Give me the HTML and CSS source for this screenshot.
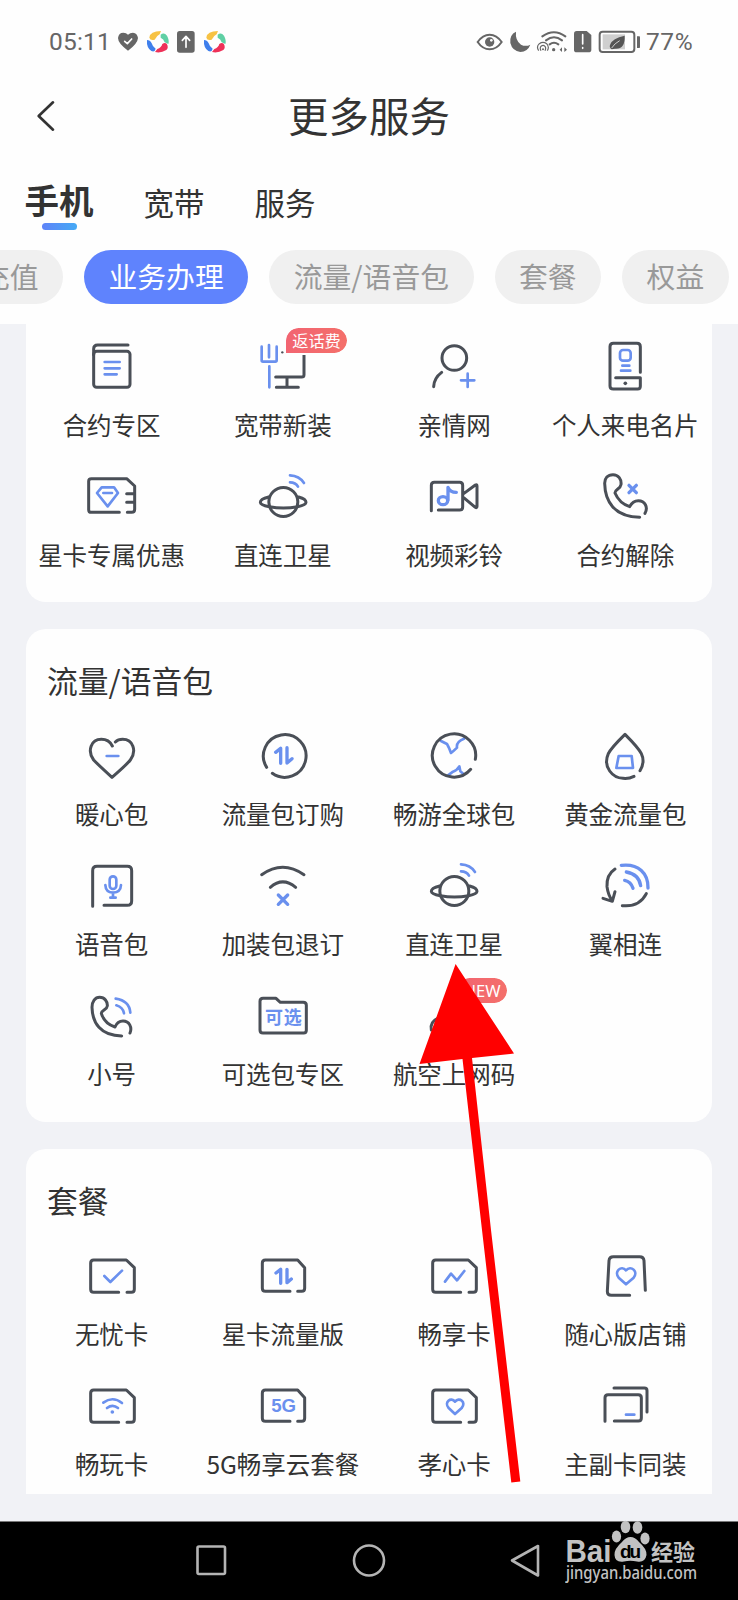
FILE: index.html
```html
<!DOCTYPE html>
<html lang="zh-CN">
<head>
<meta charset="utf-8">
<title>更多服务</title>
<link rel="stylesheet" href="styles.css">
</head>
<body>
<svg class="defs" width="0" height="0">
  <defs>
    <symbol id="sat" viewBox="753 42 192 192">
      <circle class="d" cx="850" cy="156" r="43.500"/>
      <path class="d" d="M806 141Q781 147 781 157Q781 166 808 170Q850 178 893 170Q918 166 918 157Q918 147 896 141"/>
      <path class="b" d="M870 76Q898 77 912 99M870 97Q887 97 894 110"/>
    </symbol>
    <symbol id="sim" viewBox="239 39 192 192">
      <path class="d" d="M355 187H280q-9 0-9-9V99q0-9 9-9H378L402 113V178q0 9-9 9H380"/>
    </symbol>
    <symbol id="pinwheel" viewBox="435 90 72 72">
      <path fill="#f7c244" d="M445 113Q447 93 480 93L476 103Q466 108 461 119Q448 123 445 113Z"/>
      <path fill="#5fd0a4" d="M479 104Q489 95 498 107Q506 122 502 132L491 127Q488 117 479 113Z"/>
      <path fill="#ee3158" d="M497 131Q504 142 496 150Q480 160 462 156L469 147Q481 143 484 132Q491 127 497 131Z"/>
      <path fill="#3f7fec" d="M438 120Q447 120 452 130Q455 141 464 146Q461 158 451 153Q436 143 438 120Z"/>
    </symbol>
  </defs>
</svg>

<div class="phone">
  <header class="head">
    <div class="status">
      <span class="time">05:11</span>
      <svg width="22" height="24" viewBox="352 90 66 72"><path class="g" d="M385 152Q355 130 355 114Q357 98 371 98Q380 98 385 104Q391 98 400 98Q413 99 415 114Q414 131 385 152Z"/><path class="w" d="M375 124L383 131L396 117"/></svg>
      <svg width="24" height="24"><use href="#pinwheel"/></svg>
      <svg width="20" height="24" viewBox="528 90 60 72"><rect class="g" x="531" y="93" width="53" height="65" rx="8"/><path class="w" d="M558 142V110M547 121L558 109L569 121"/></svg>
      <svg width="24" height="24"><use href="#pinwheel"/></svg>
      <div class="status-right">
        <svg width="28" height="24" viewBox="322 90 84 72"><path class="gs" d="M327 126Q342 104 363 104Q384 104 399 126Q384 148 363 148Q342 148 327 126Z"/><circle class="g" cx="363" cy="126" r="14"/><circle fill="#fff" cx="368" cy="121" r="4"/></svg>
        <svg width="22" height="24" viewBox="424 90 66 72"><path class="g" d="M445 95Q425 104 428 129Q434 153 458 156Q480 155 488 134Q474 141 460 134Q442 121 445 95Z"/></svg>
        <svg width="32" height="24" viewBox="504 90 96 72"><path class="gs" d="M523 109Q558 84 592 109M534 121Q558 103 582 121M545 133Q558 123 571 133"/><circle class="g" cx="557" cy="149" r="5"/><path class="thin" d="M512 152Q504 140 514 131Q525 123 536 131Q545 141 538 152M519 152Q514 143 520 138Q526 134 531 139Q535 144 531 152"/><circle class="g" cx="525" cy="148" r="3"/><path class="g" d="M582 142V156L575 149ZM589 142V156L597 149Z"/></svg>
        <svg width="20" height="24" viewBox="612 90 60 72"><path class="g" d="M623 93H653L667 105V149Q667 157 658 157H623Q615 157 615 149V101Q615 93 623 93Z"/><path class="w" d="M641 104V132M641 143V145"/></svg>
        <svg width="43" height="24" viewBox="690 90 129 72"><rect x="704" y="103" width="67" height="45" fill="#cfcfcf"/><rect class="gs" x="695" y="95" width="104" height="61" rx="9"/><path class="g" d="M807 109h7q2 0 2 3v29q0 3-2 3h-7Z"/><path fill="#555" d="M770 107Q772 148 741 146L731 148Q722 142 727 133Q733 115 770 107Z"/><path d="M731 144Q740 130 755 122" fill="none" stroke="#cfcfcf" stroke-width="3"/></svg>
        <span class="pct">77%</span>
      </div>
    </div>
    <div class="bar">
      <svg class="back" width="24" height="34" viewBox="102 296 72 102"><path d="M159 306L116 347L159 388"/></svg>
      <h1>更多服务</h1>
    </div>
    <nav class="tabs">
      <span class="tab on">手机</span><span class="tab">宽带</span><span class="tab">服务</span>
    </nav>
    <div class="chips">
      <span class="chip">充值</span><span class="chip on">业务办理</span><span class="chip">流量/语音包</span><span class="chip">套餐</span><span class="chip">权益</span>
    </div>
  </header>

  <main class="scroll">
    <section class="card first">
      <div class="grid">
        <div class="cell"><svg class="ico" viewBox="239 312 192 192"><rect class="d" x="280" y="364" width="109" height="108" rx="9"/><path class="d" d="M280 374V357q0-12 12-12H383"/><path class="b" d="M313 396H358M313 415H358M313 433H349"/></svg><span>合约专区</span></div>
        <div class="cell"><svg class="ico" viewBox="753 312 192 192"><path class="b" d="M785 350V391q0 4 4 4H826q4 0 4-4V350M807 345V382M808 409V472"/><path class="d" d="M827 441H905q7 0 7-7V350M829 472H895M861 445V468"/><circle cx="847" cy="367" r="3.500" fill="#4a4f57"/></svg><span>宽带新装</span><i class="badge">返话费</i></div>
        <div class="cell"><svg class="ico" viewBox="162 312 192 192"><circle class="d" cx="259" cy="384" r="37"/><path class="d" d="M221 427Q198 444 197 470"/><path class="b" d="M299 431V471M279 451H319"/></svg><span>亲情网</span></div>
        <div class="cell"><svg class="ico" viewBox="676 312 192 192"><path class="d" d="M818 427V350q0-10-10-10H737q-10 0-10 10V468q0 9 10 9H810q8 0 8-8V443H744"/><circle cx="773" cy="460" r="5.500" fill="#4a4f57"/><rect class="b" x="757" y="360" width="32" height="32" rx="9"/><path class="b" d="M764 407H785M760 422H788"/></svg><span>个人来电名片</span></div>
        <div class="cell"><svg class="ico" viewBox="239 42 192 192"><path class="d" d="M357 187H273q-8 0-8-8V94q0-8 8-8H379L403 108V178q0 9-9 9H381M379 131H400M379 157H400"/><path class="b" d="M304 112H341L353 129L322 169L290 129ZM309 129H335"/></svg><span>星卡专属优惠</span></div>
        <div class="cell"><svg class="ico"><use href="#sat"/></svg><span>直连卫星</span></div>
        <div class="cell"><svg class="ico" viewBox="162 42 192 192"><path class="d" d="M190 182V106q0-9 9-9H275q9 0 9 9V171q0 9-9 9H211M287 131L322 105q5-3 5 3V169q0 6-5 3L287 143"/><ellipse class="b fat" cx="225" cy="152" rx="14" ry="12"/><path class="b fat" d="M240 150V112Q246 127 265 127"/></svg><span>视频彩铃</span></div>
        <div class="cell"><svg class="ico" viewBox="676 42 192 192"><path class="d" d="M816 202C740 200 712 155 711 100C711 85 720 74 736 74C752 74 762 88 760 104C758 118 741 118 742 129C750 148 768 164 786 170C792 158 800 152 812 152C832 152 842 172 832 190"/><path class="b fat" d="M784 106L806 128M806 106L784 128"/></svg><span>合约解除</span></div>
      </div>
    </section>

    <section class="card">
      <h2>流量/语音包</h2>
      <div class="grid">
        <div class="cell"><svg class="ico" viewBox="239 39 192 192"><path class="d" d="M336 108Q326 88 303 88C272 88 260 123 280 150Q290 161 335 202Q380 163 390 150C410 123 398 88 367 88Q353 88 345 96"/><path class="b" d="M319 138H354"/></svg><span>暖心包</span></div>
        <div class="cell"><svg class="ico" viewBox="753 39 192 192"><path class="d" d="M800 172A64 64 0 1 1 817 190"/><path class="b fat" d="M827 127L842 115V160M861 113V159L876 146"/></svg><span>流量包订购</span></div>
        <div class="cell"><svg class="ico" viewBox="162 39 192 192"><path class="b" d="M219 93L237 102Q243 112 249 129Q257 123 267 113Q264 95 288 86M240 196L255 185Q267 181 274 169L277 184L284 190"/><path class="d" d="M308 178A65 65 0 1 1 322 148"/></svg><span>畅游全球包</span></div>
        <div class="cell"><svg class="ico" viewBox="676 39 192 192"><path class="d" d="M817 182Q833 156 821 131Q813 114 772 73Q730 114 722 131C704 172 736 204 766 205Q783 207 799 199"/><path class="b" d="M753 138H792L796 174H746Z"/></svg><span>黄金流量包</span></div>
        <div class="cell"><svg class="ico" viewBox="239 429 192 192"><path class="d" d="M277 589V482q0-13 13-13H381q13 0 13 13V573q0 13-13 13H311"/><rect class="b" x="328" y="499" width="20" height="38" rx="10"/><path class="b" d="M315 525Q316 547 338 548Q361 547 362 525M338 549V561M330 563H346"/></svg><span>语音包</span></div>
        <div class="cell"><svg class="ico" viewBox="753 429 192 192"><path class="d" d="M785 494Q848 449 912 494M811 532Q848 499 887 532"/><path class="b fat" d="M835 555L863 583M863 555L835 583"/></svg><span>加装包退订</span></div>
        <div class="cell"><svg class="ico"><use href="#sat"/></svg><span>直连卫星</span></div>
        <div class="cell"><svg class="ico" viewBox="676 429 192 192"><path class="d" d="M742 477Q716 494 718 530Q721 554 733 571M706 565L734 574L742 545M764 587Q815 592 836 551"/><path class="b fat" d="M761 466C813 460 842 490 841 534M776 486Q814 493 819 527M771 511Q790 515 796 535"/></svg><span>翼相连</span></div>
        <div class="cell"><svg class="ico" viewBox="239 69 192 192"><path class="d" d="M364 228C300 227 276 188 275 142C275 125 284 112 298 112C313 112 322 125 321 138C320 150 303 150 303 160C309 180 325 195 344 201C349 189 356 183 368 183C387 183 396 202 389 219"/><path class="b" d="M346 116Q387 122 390 158M348 136Q368 142 371 160"/></svg><span>小号</span></div>
        <div class="cell"><svg class="ico" viewBox="753 69 192 192"><path class="d" d="M780 210V124q0-9 9-9H828L841 127H910q9 0 9 9V211q0 8-8 8H789q-9 0-9-9Z"/><text class="cjk" x="850" y="193" textLength="110">可选</text></svg><span>可选包专区</span></div>
        <div class="cell"><svg class="ico" viewBox="162 69 192 192"><path class="d" d="M209 175Q185 186 190 210"/></svg><span>航空上网码</span><i class="badge new">NEW</i></div>
      </div>
    </section>

    <section class="card last">
      <h2>套餐</h2>
      <div class="grid">
        <div class="cell"><svg class="ico" viewBox="239 39 192 192"><use href="#sim" x="239" y="39" width="192" height="192"/><path class="b" d="M312 138L330 156L365 122"/></svg><span>无忧卡</span></div>
        <div class="cell"><svg class="ico" viewBox="753 39 192 192"><path class="d" d="M870 184H796q-9 0-9-9V99q0-9 9-9H893L914 113V175q0 9-9 9H893"/><path class="b fat" d="M828 129L842 118V160M861 118V158L874 147"/></svg><span>星卡流量版</span></div>
        <div class="cell"><svg class="ico" viewBox="162 39 192 192"><use href="#sim" x="162" y="39" width="192" height="192"/><path class="b" d="M231 155L249 131L267 151L289 123"/></svg><span>畅享卡</span></div>
        <div class="cell"><svg class="ico" viewBox="676 39 192 192"><path class="d" d="M833 181L829 92q-1-12-13-12H737q-12 0-13 12L719 184q0 12 12 12H786"/><path class="b" d="M775 163L753 143C738 125 761 104 775 121C790 104 813 125 798 143Z"/></svg><span>随心版店铺</span></div>
        <div class="cell"><svg class="ico" viewBox="239 39 192 192"><use href="#sim" x="239" y="39" width="192" height="192"/><path class="b" d="M309 128Q337 107 365 129M320 144Q337 131 353 144"/><circle cx="336" cy="156" r="5.500" fill="#6a90ee"/></svg><span>畅玩卡</span></div>
        <div class="cell"><svg class="ico" viewBox="753 39 192 192"><path class="d" d="M870 184H796q-9 0-9-9V99q0-9 9-9H893L914 113V175q0 9-9 9H893"/><text class="lat" x="851" y="156" textLength="74">5G</text></svg><span>5G畅享云套餐</span></div>
        <div class="cell"><svg class="ico" viewBox="162 39 192 192"><use href="#sim" x="162" y="39" width="192" height="192"/><path class="b" d="M261 162L242 144C227 127 249 109 261 125C274 109 296 127 281 144Z"/></svg><span>孝心卡</span></div>
        <div class="cell"><svg class="ico" viewBox="676 429 192 192"><path class="d" d="M712 574V503q0-9 9-9H812q9 0 9 9V564q0 9-9 9H740M739 474H830q8 0 8 8V546"/><path class="b" d="M775 554H800"/></svg><span>主副卡同装</span></div>
      </div>
    </section>
  </main>

  <footer class="nav">
    <svg width="36" height="36"><rect x="3.500" y="3.500" width="27.500" height="27.500" rx="1.500"/></svg>
    <svg width="36" height="36"><circle cx="18" cy="17.500" r="15"/></svg>
    <svg width="36" height="36"><path d="M4 17.500L30 3V32.500Z"/></svg>
  </footer>

  <svg class="mark" width="136" height="68" viewBox="0 0 136 68">
    <text class="m1" x="0.500" y="41.500" textLength="46" lengthAdjust="spacingAndGlyphs">Bai</text>
    <ellipse cx="51.500" cy="16.500" rx="4.600" ry="6"/><ellipse cx="60.500" cy="7" rx="4.800" ry="6.200"/><ellipse cx="72.500" cy="7.500" rx="4.800" ry="6.200"/><ellipse cx="80" cy="18.500" rx="4.600" ry="6"/>
    <path d="M65.500 17Q70 17 74 22Q82 29 81.500 35Q80 43 72 41.500Q65 40 59 41.500Q50 43 49.500 35Q49 29 57 22Q61 17 65.500 17Z"/>
    <text class="m2" x="55" y="38" textLength="21">du</text>
    <text class="m3" x="86" y="39.500" textLength="44">经验</text>
    <text class="m4" x="1" y="59" textLength="131" lengthAdjust="spacingAndGlyphs">jingyan.baidu.com</text>
  </svg>
  <svg class="arrow" width="102" height="520" viewBox="419 963 102 520"><path d="M455.600 964L514 1053.500L472 1058L491 1230L520.300 1481.500L511.300 1482.500L482 1230L462.500 1059L419.500 1064Z"/></svg>
</div>
</body>
</html>
```

FILE: styles.css
```css
* { box-sizing: border-box; }
body {
  margin: 0;
  font-family: "Noto Sans CJK SC", sans-serif;
  color: #333;
  background: #fff;
}
.defs { position: absolute; }
.phone {
  position: relative;
  width: 738px;
  height: 1600px;
  overflow: hidden;
  display: flex;
  flex-direction: column;
}

.head { height: 324px; flex: none; background: #fefefe; }
.status {
  height: 84px;
  padding: 0 45px 0 49px;
  display: flex;
  align-items: center;
  gap: 6.5px;
  color: #666;
  font: 24.5px/30px Roboto, sans-serif;
}
.time { width: 61.5px; white-space: nowrap; letter-spacing: 0.2px; }
.status-right { margin-left: auto; display: flex; align-items: center; gap: 5px; }
.g { fill: #666; }
.gs { fill: none; stroke: #666; stroke-width: 6; stroke-linecap: round; }
.thin { fill: none; stroke: #666; stroke-width: 3.5; }
.w { fill: none; stroke: #fff; stroke-width: 5; stroke-linecap: round; stroke-linejoin: round; }
.pct { width: 47px; letter-spacing: 0.6px; }

.bar {
  height: 64px;
  padding: 0 34px;
  display: grid;
  grid-template-columns: 24px 1fr 24px;
  align-items: center;
}
.back path { fill: none; stroke: #333; stroke-width: 8; stroke-linecap: round; stroke-linejoin: round; }
h1 { margin: 0; padding-bottom: 2px; font-size: 40.5px; line-height: 60px; font-weight: 400; text-align: center; }

.tabs {
  height: 102px;
  padding: 29px 24.5px 0;
  display: flex;
  align-items: flex-start;
  gap: 50px;
  font-size: 30.5px;
  line-height: 50px;
}
.tab.on {
  font-size: 34.5px;
  font-weight: 700;
  line-height: 45px;
  display: flex;
  flex-direction: column;
  align-items: center;
}
.tab.on::after {
  content: "";
  width: 35px;
  height: 7px;
  margin-top: 1px;
  border-radius: 4px;
  background: linear-gradient(90deg, #5f83f8, #45aaf5);
}

.chips { display: flex; gap: 21px; margin-left: -43.6px; }
.chip {
  flex: none;
  height: 53.5px;
  padding: 0 24.5px;
  border-radius: 27px;
  background: #f0f0f0;
  color: #999;
  font-size: 28.8px;
  line-height: 52px;
  white-space: nowrap;
}
.chip.on { background: #5f83fd; color: #fff; }

.scroll {
  height: 1197px;
  flex: none;
  padding: 0 26px 27px;
  background: #f1f2f6;
  display: flex;
  flex-direction: column;
  gap: 27px;
}
.card { flex: none; height: 493px; background: #fefefe; border-radius: 20px; }
.card.first { height: 278px; padding-top: 10px; border-radius: 0 0 20px 20px; }
.card.last { height: 345px; border-radius: 20px 20px 0 0; }
h2 {
  margin: 0;
  height: 94px;
  padding: 0 21px;
  font-size: 30.8px;
  line-height: 101px;
  font-weight: 400;
}
.grid { display: grid; grid-template-columns: repeat(4, 171.25px); }
.cell {
  position: relative;
  height: 130px;
  display: flex;
  flex-direction: column;
  align-items: center;
  gap: 9px;
  font-size: 24.5px;
  line-height: 36px;
  white-space: nowrap;
}
.ico { width: 64px; height: 64px; flex: none; }
.d { fill: none; stroke: #4a4f57; stroke-width: 9; stroke-linecap: round; stroke-linejoin: round; }
.b { fill: none; stroke: #6a90ee; stroke-width: 8; stroke-linecap: round; stroke-linejoin: round; }
.fat { stroke-width: 10; }
.cjk { font-size: 54px; font-weight: 700; fill: #6a90ee; text-anchor: middle; }
.lat { font: 700 56px "Liberation Sans", sans-serif; fill: #6a90ee; text-anchor: middle; }
.badge {
  position: absolute;
  left: 88.5px;
  top: -6px;
  height: 25px;
  padding: 0 6.5px;
  border-radius: 12.5px 12.5px 12.5px 0;
  background: linear-gradient(100deg, #f26472, #f4706a);
  outline: 2px solid #fefefe;
  color: #fff;
  font-size: 16.2px;
  font-style: normal;
  line-height: 24px;
}
.badge.new { top: -5px; font: 16.5px/25px "Noto Sans", sans-serif; }

.nav {
  height: 79px;
  flex: none;
  background: #000;
  border-top: 1px solid #777;
  display: grid;
  grid-template-columns: repeat(3, 157px);
  justify-content: center;
  justify-items: center;
  align-items: center;
}
.nav svg { fill: none; stroke: #b4b4b4; stroke-width: 2.6; stroke-linejoin: round; }

.mark { position: absolute; left: 565px; top: 1520px; fill: #c2c2c2; }
.m1 { font: 700 31px "Liberation Sans", sans-serif; }
.m2 { font: 700 19px "Liberation Sans", sans-serif; fill: #000; }
.m3 { font-size: 22px; font-weight: 700; }
.m4 { font: 500 18px "Noto Sans", sans-serif; }
.arrow { position: absolute; left: 419px; top: 963px; fill: #f00; }
```
